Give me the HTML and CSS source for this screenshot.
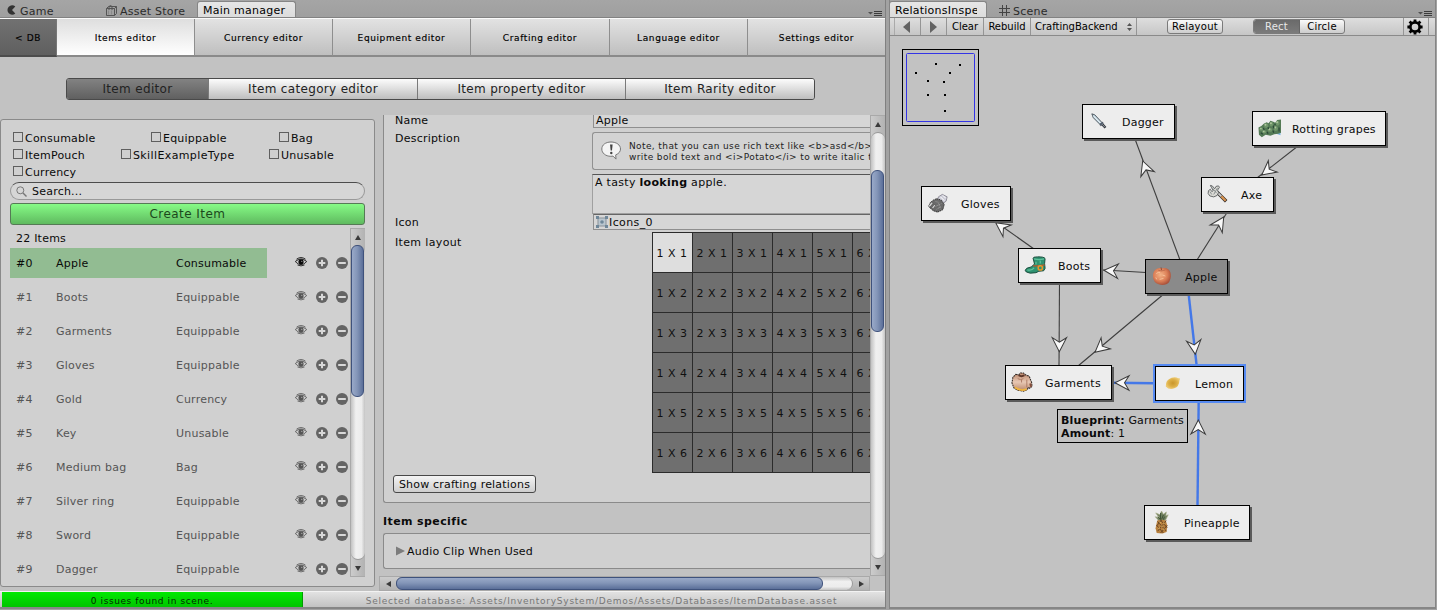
FILE: index.html
```html
<!DOCTYPE html>
<html lang="en">
<head>
<meta charset="utf-8">
<title>Main manager</title>
<link rel="stylesheet" href="styles.css">
</head>
<body>
<svg class="defs" width="0" height="0">
  <defs>
    <linearGradient id="tunic" x1="0" y1="0" x2="0" y2="1"><stop offset="0" stop-color="#b98468"/><stop offset=".5" stop-color="#e8c8b4"/><stop offset="1" stop-color="#b88468"/></linearGradient>
    <radialGradient id="fruit" cx=".42" cy=".4" r=".62"><stop offset="0" stop-color="#f3b387"/><stop offset=".6" stop-color="#dc8058"/><stop offset="1" stop-color="#a8503a"/></radialGradient>
    <radialGradient id="citrus"><stop offset="0" stop-color="#c9962c"/><stop offset=".6" stop-color="#dcae45"/><stop offset="1" stop-color="#ecc870"/></radialGradient>
  </defs>
  <symbol id="eye" viewBox="0 0 12 10">
    <path d="M.3 4.500Q6-.4 11.700 4.500M1.500 2.200Q6-1 10.500 2.200" fill="none" stroke="currentColor" stroke-width=".9"/>
    <path d="M.3 4.600Q6 10.800 11.700 4.600M2.500 8Q6 9.800 9.500 8" fill="none" stroke="currentColor" stroke-width=".8"/>
    <circle cx="6" cy="4.800" r="2.600" fill="currentColor"/><circle cx="6.800" cy="4.200" r=".5" fill="#ddd"/>
  </symbol>
  <symbol id="plus" viewBox="0 0 12 12"><circle cx="6" cy="6" r="6" fill="#646464"/><path d="M6 2.700v6.600M2.700 6h6.600" stroke="#d8d8d8" stroke-width="2"/></symbol>
  <symbol id="minus" viewBox="0 0 12 12"><circle cx="6" cy="6" r="6" fill="#646464"/><path d="M2.200 6h7.600" stroke="#d8d8d8" stroke-width="2"/></symbol>
  <symbol id="menu" viewBox="0 0 14 6"><path d="M0 1h5L2.500 3.600z" fill="#505050"/><path d="M6 .5h8M6 2.500h8M6 4.500h8" stroke="#3c3c3c"/></symbol>
  <symbol id="dagger" viewBox="0 0 24 24">
    <path d="M4 4l3 1 7.500 8-2 2L5.500 8z" fill="#bfd3df" stroke="#3c464e" stroke-width=".9"/><path d="M5.500 6l7.500 7.600" stroke="#f8ffff" stroke-width=".9"/><path d="M15 12.800l1 1-2.600 2.600-1-1z" fill="#607a8c" stroke="#334" stroke-width=".8"/><path d="M15 15l3.200 3.500" stroke="#30343a" stroke-width="2.600"/><path d="M15 15l2.700 3" stroke="#a2abb4" stroke-width=".9"/>
  </symbol>
  <symbol id="grapes" viewBox="0 0 24 24">
    <path d="M14 15l9.500-1v5l-6-2z" fill="#79b3df"/>
    <path d="M.5 11l3-1.500L6 7l3-1.500 2 1 2-2.500 3 1 2 1 2-3 4-.5v14l-3 1-4 .5-4 1.500-5-1-4 2.500-3-2.500z" fill="#547a55"/>
    <g fill="#6f9569"><ellipse cx="3.500" cy="12.700" rx="2.200" ry="1.700"/><ellipse cx="8.500" cy="9" rx="2.200" ry="2.600"/><ellipse cx="14" cy="7.500" rx="1.800" ry="2.500"/><ellipse cx="20.500" cy="6.500" rx="2" ry="2.600"/><ellipse cx="12.500" cy="13.500" rx="2.500" ry="2"/><ellipse cx="18.500" cy="12" rx="2.300" ry="2.600"/><ellipse cx="6.500" cy="15.500" rx="2.200" ry="1.800"/></g>
    <g fill="#adc69c"><circle cx="7.800" cy="8" r="1"/><circle cx="13.500" cy="6.500" r="1"/><circle cx="20" cy="5.500" r="1.100"/><circle cx="3" cy="12" r=".9"/><circle cx="18" cy="11" r="1"/><circle cx="12" cy="12.800" r="1"/><circle cx="6" cy="15" r=".9"/></g>
    <path d="M5.500 11.500l1 2M10.500 10.500l.5 2M16 9l.5 3M9.500 15.500l1 2M15.500 14l1 2.500M3 16.500l2 1.500M17.500 7l.5 1.500M22 11v4" stroke="#2c4a38" stroke-width="1.300" fill="none"/>
  </symbol>
  <symbol id="axe" viewBox="0 0 24 24">
    <path d="M10 9l10 10" stroke="#2d2926" stroke-width="3.600"/><path d="M9 8l6 6" stroke="#ccc" stroke-width="2"/><path d="M15 14l4.500 4.500" stroke="#d69250" stroke-width="2.400"/>
    <path d="M3.500 2.500l2 .5 2.500 3 1.500-2.500L12 3l1 1.500-2 3 1 2.500-1.500 3-3.500 1.500-4-1L1.200 11 1.500 8l2-1.500L5 9l1.500-1z" fill="#dbdbd6" stroke="#55585a" stroke-width=".9"/><path d="M4 3.500l6 7M7 12l4-7M3 9l2 3" stroke="#878d8e" fill="none"/>
  </symbol>
  <symbol id="gloves" viewBox="0 0 24 24">
    <path d="M12 5l4-2.500 5 2.500-1 4.500-4 3-5-4z" fill="#cdcdd8" stroke="#86848f" stroke-width=".9"/><path d="M14 5l4 4M16.500 3.500l3 3" stroke="#fff"/>
    <path d="M10 7l5 1.500 3 4.500-1.500 5.500-5.500 2.500-4.500-1.500-4.500-4 1.500-4.500 3-2.500z" fill="#6a6a6a" stroke="#303030" stroke-dasharray="1.500 .8"/><path d="M1.500 14.500l3-4 2 1-3.500 4.500zM4.500 17l3-4 1.500 1-2.500 3.500z" fill="#d4d4d4" stroke="#444" stroke-width=".6"/><path d="M9 15l6-3M10 18l5-3M9 10l4 1M12 12l2 6" stroke="#a4a4a4" stroke-dasharray="1 1"/>
  </symbol>
  <symbol id="boots" viewBox="0 0 24 24">
    <path d="M9.500 4.500Q9 3 14 3q7-.2 8 1.800L21.500 10l.5 5-1.500 2.500-5 .5-3 1.500-6 .5Q1 19 1.300 17q.2-2.500 6.200-3.500l3.500-3z" fill="#2e9270" stroke="#17493a"/><path d="M10.500 5q5 1.500 10.500 0M12.500 8v3M17 7v3M3.500 16.500q5 1 7-2" stroke="#5fc19b" fill="none" stroke-width="1.300"/><path d="M9.500 12.500q6 0 12-1" stroke="#a55e34" stroke-width="1.600" fill="none"/><circle cx="17" cy="14.500" r="2.200" fill="none" stroke="#e7962b" stroke-width="1.600"/>
  </symbol>
  <symbol id="apple" viewBox="0 0 24 24"><path d="M11.500 3.500Q15 2.500 18 4.500q3 2.500 2.700 7.500-.7 6.500-4.700 8-4 1.500-8 .2Q2.500 18.500 2 12q-.2-6 4.500-8.300 2.500-1 5-.2z" fill="url(#fruit)"/><path d="M10.500 2.500l.5 3" stroke="#8a4a38"/><path d="M7.500 5.500q3.500 1.500 7.500-.3" stroke="#bd6a4a" fill="none" stroke-width=".9"/><path d="M5.500 9q2-2 4-1M5 13l1 2M9 15l4-1M12 10.500l3 1" stroke="#f8c69e" fill="none" stroke-width=".9"/></symbol>
  <symbol id="garments" viewBox="0 0 24 24">
    <path d="M5 3.500l3 .5 2-2h3l2 2 4 1.500 2.500 6.500.5 4-2.500 2-1.500-1-1 2.500-4 1.500-6-1-4-2.500-2-5 1-6z" fill="url(#tunic)" stroke="#342b27" stroke-width="1.100" stroke-dasharray="2 .7"/><path d="M8 4.500q3 2 6 0" stroke="#5b3427" stroke-width="2" fill="none"/><path d="M7 8q3 2 6 0M11 9v3M16.500 9v8" stroke="#a8745e" fill="none" stroke-width=".9"/><path d="M4 17q6 4.500 12.500 2" stroke="#efb43e" stroke-width="1.900" fill="none"/><path d="M20 13l1 3.500" stroke="#844d3b" stroke-width="2"/>
  </symbol>
  <symbol id="lemon" viewBox="0 0 24 24"><path d="M5 15q-.5-6.500 6-9 4-1.200 7 .5l1.800.3-.6 2.200Q19 15 14 17q-5.500 2-9-2z" fill="url(#citrus)"/></symbol>
  <symbol id="pineapple" viewBox="0 0 24 24">
    <path d="M9 10L5.500 6l4 1-3.500-5 4.500 2 1.500-4 2 3.500 3-2.500-.5 4 2.500-1-3 6z" fill="#718160" stroke="#a6ac88" stroke-width=".7"/><path d="M11 2v7M14 4l-2 5M8 6l3 3M15 6l-1 3" stroke="#37492f" stroke-width=".9"/>
    <path d="M7.500 10q4.500-1.500 9 0l1.500 5-.7 7-4.300 1.500-6-.5-1.200-5z" fill="#b9813f"/><path d="M8 11l9 10M7 15l7 8M11 9.500l7 8M17 10l-9 11M18 15l-7 8M12 9.500l-5 6" stroke="#603d1e" stroke-width=".9"/><path d="M10 12h1M14 13h1M12 16h1M9 18h1M14 19h1" stroke="#f1cd78" stroke-width="1.500"/>
  </symbol>
</svg>

<main class="desktop">
  <section class="dock manager">
    <nav class="tabs">
      <div class="tab game"><svg width="9" height="10" viewBox="0 0 9 10"><path d="M8.300 1.500A4.700 4.700 0 1 0 8.300 8.500L5 5z" fill="#333"/></svg><span>Game</span></div>
      <div class="tab store"><svg width="11" height="11" viewBox="0 0 11 11" fill="none" stroke="#555"><path d="M.5 3.500h8v7h-8zM8.500 10.500l2-2v-7l-2 2M.5 3.500l2-2h8M3 5V1.500Q4.500-.5 6 1.500V5"/><path d="M2.500 5.500v4M5.500 5.500v4" stroke="#8a8a8a"/></svg><span>Asset Store</span></div>
      <div class="tab active main-tab">Main manager</div>
      <svg class="menu" width="14" height="6"><use href="#menu"/></svg>
    </nav>
    <nav class="editors">
      <a class="db">&lt; DB</a><a class="on">Items editor</a><a>Currency editor</a><a>Equipment editor</a><a>Crafting editor</a><a>Language editor</a><a>Settings editor</a>
    </nav>
    <nav class="segments"><a class="on">Item editor</a><a>Item category editor</a><a>Item property editor</a><a>Item Rarity editor</a></nav>
    <div class="work">
      <aside class="panel">
        <div class="filters">
          <div class="frow f1"><label><i></i>Consumable</label><label><i></i>Equippable</label><label><i></i>Bag</label></div>
          <div class="frow f2"><label><i></i>ItemPouch</label><label><i></i>SkillExampleType</label><label><i></i>Unusable</label></div>
          <div class="frow"><label><i></i>Currency</label></div>
        </div>
        <div class="search"><svg width="11" height="11" viewBox="0 0 11 11" fill="none" stroke="#777"><circle cx="4.300" cy="4.300" r="3.500"/><path d="M7 7l3.500 3.500" stroke-width="1.400"/></svg><span>Search...</span></div>
        <div class="create">Create Item</div>
        <div class="listwrap">
          <div class="list"><div class="count">22 Items</div><div id="items"></div></div>
          <div class="vbar listbar"><b class="up"></b><div class="track"><div class="thumb"></div></div><b class="down"></b></div>
        </div>
      </aside>
      <div class="detail">
        <div class="view">
          <div class="scrollarea">
            <div class="box props">
              <div class="prop pname"><span>Name</span><div class="field">Apple</div></div>
              <div class="prop pdesc"><span>Description</span>
                <div class="desc">
                  <div class="help"><svg width="21" height="19" viewBox="0 0 21 19"><path d="M10 1C4.500 1 .8 4 .8 8s3.700 7.300 9 7.300l2.200-.2 3 3-.3-4.200C18 12.500 19.500 10.500 19.500 8 19.500 4 15.500 1 10 1z" fill="#f4f4f4" stroke="#777"/><path d="M9 3.500h2.600L11 9.600H9.700z" fill="#444"/><circle cx="10.300" cy="12" r="1.200" fill="#444"/></svg><p>Note, that you can use rich text like &lt;b&gt;asd&lt;/b&gt;<br>write bold text and &lt;i&gt;Potato&lt;/i&gt; to write italic t</p></div>
                  <div class="textarea">A tasty <b>looking</b> apple.</div>
                </div>
              </div>
              <div class="prop picon"><span>Icon</span><div class="field"><svg width="12" height="12" viewBox="0 0 12 12"><path d="M2 2h8v8H2z" fill="#b9c6cf" stroke="#8b9299"/><g fill="#6f8799"><path d="M0 0h3v3H0zM9 0h3v3H9zM0 9h3v3H0zM9 9h3v3H9z"/><circle cx="6" cy="6" r="1.800"/></g></svg><span>Icons_0</span></div></div>
              <div class="prop playout"><span>Item layout</span><div class="cells" id="cells"></div></div>
              <div class="button">Show crafting relations</div>
            </div>
            <h2>Item specific</h2>
            <div class="box clip"><svg width="9" height="10"><path d="M0 0.500L9 5 0 9.500z" fill="#7c7c7c"/></svg><span>Audio Clip When Used</span></div>
          </div>
          <div class="hbar"><b class="left"></b><div class="track"><div class="thumb"></div></div><b class="right"></b></div>
        </div>
        <div class="vbar detailbar"><b class="up"></b><div class="track"><div class="thumb"></div></div><b class="down"></b></div>
      </div>
    </div>
    <footer class="status"><div class="issues">0 issues found in scene.</div><div class="dbpath">Selected database: Assets/InventorySystem/Demos/Assets/Databases/ItemDatabase.asset</div></footer>
  </section>

  <section class="dock relations">
    <nav class="tabs">
      <div class="tab active rel-tab"><span>RelationsInspector</span></div>
      <div class="tab scene"><svg width="11" height="11" viewBox="0 0 11 11"><path d="M3.500 0v11M7.500 0v11M0 3.500h11M0 7.500h11" stroke="#444"/></svg><span>Scene</span></div>
      <svg class="menu" width="14" height="6"><use href="#menu"/></svg>
    </nav>
    <div class="toolbar">
      <div class="t nav1"><svg width="7" height="12"><path d="M7 0v12L0 6z" fill="#636363"/></svg></div>
      <div class="t nav2"><svg width="7" height="12"><path d="M0 0v12l7-6z" fill="#636363"/></svg></div>
      <div class="t clear">Clear</div><div class="t rebuild">Rebuild</div>
      <div class="t backend"><span>CraftingBackend</span><svg width="5" height="8"><path d="M0 3h5L2.500 0zM0 5h5L2.500 8z" fill="#555"/></svg></div>
      <div class="pill relayout">Relayout</div>
      <div class="pill choice"><span class="on">Rect</span><span>Circle</span></div>
      <div class="gear"><svg width="16" height="16" viewBox="-8 -8 16 16"><circle r="4.600" fill="none" stroke="#000" stroke-width="2.600"/><g stroke="#000" stroke-width="2.800"><path d="M0-7.600V-5M0 7.600V5M-7.600 0H-5M7.600 0H5M-5.400-5.400l2 2M5.400 5.400l-2-2M-5.400 5.400l2-2M5.400-5.400l-2 2"/></g></svg></div>
    </div>
    <div class="graph" id="graph">
      <svg class="edges" width="547" height="572" viewBox="889 36 547 572" id="edges">
        <rect x="902.500" y="49.500" width="76" height="76" fill="none" stroke="#000"/>
        <rect x="906.500" y="53.500" width="68" height="68" rx="1" fill="none" stroke="#3434e6"/>
      </svg>
      <div class="tooltip"><b>Blueprint:</b> Garments<br><b>Amount</b>: 1</div>
    </div>
  </section>
</main>
<script src="app.js"></script>
</body>
</html>
```
FILE: styles.css
```css
* { box-sizing: border-box; }
body { margin: 0; width: 1437px; height: 610px; overflow: hidden; background: #a2a2a2; font: 11px/14px "DejaVu Sans", sans-serif; letter-spacing: .22px; color: #0a0a0a; white-space: nowrap; }
svg { display: block; flex: none; }
.defs { position: absolute; }
.desktop { display: grid; grid-template-columns: 886px 547px; column-gap: 3px; height: 610px; }
.dock { display: flex; flex-direction: column; height: 609px; background: #c2c2c2; overflow: hidden; border-bottom: 2px solid #868686; }
.manager { border-right: 1px solid #808080; }
.relations { border-left: 1px solid #858585; border-right: 1px solid #858585; }

.tabs { display: flex; height: 18px; flex: none; background: linear-gradient(#a5a5a5, #9f9f9f); border-bottom: 1px solid #828282; color: #2b2b2b; }
.tab { display: flex; padding-top: 5px; height: 17px; line-height: 13px; letter-spacing: .25px; }
.game { width: 99px; padding-left: 7px; gap: 4px; }
.store { width: 98px; padding-left: 7px; gap: 3px; }
.tab.active { padding: 2px 0 0 5px; background: linear-gradient(#e6e6e6, #dcdcdc); border: 1px solid #858585; border-bottom: 0; border-radius: 3px 3px 0 0; margin-top: 1px; height: 16px; color: #000; }
.tab svg { margin-top: 0; }
.main-tab { width: 99px; }
.menu { margin: 11px 3px 0 auto; }
.tab.rel-tab { width: 98px; margin-left: -1px; }
.rel-tab span { width: 82px; overflow: hidden; }
.scene { padding-left: 12px; gap: 3px; }

.editors { display: grid; grid-template-columns: 57px 138px 138px 138px 139px 138px 1fr; height: 39px; flex: none; border-top: 1px solid #fafafa; }
.editors a { display: flex; align-items: center; justify-content: center; padding-top: 1px; font-size: 9px; letter-spacing: .6px; background: linear-gradient(#e2e2e2, #bfbfbf); border-right: 1px solid #8e8e8e; border-bottom: 2px solid #8a8a8a; color: #000; -webkit-text-stroke: .15px #000; }
.editors a:last-child { border-right: 0; }
.editors .db { background: linear-gradient(#717171, #5f5f5f); border-bottom-color: #4c4c4c; border-right-color: #777; }
.editors .on { background: linear-gradient(#dedede, #fff); }

.segments { display: grid; grid-template-columns: 142px 209px 208px 1fr; width: 749px; height: 22px; margin: 21px 0 0 66px; flex: none; border: 1px solid #4a4a4a; border-radius: 3px; overflow: hidden; font-size: 12px; letter-spacing: .33px; }
.segments a { display: flex; align-items: center; justify-content: center; background: linear-gradient(#fcfcfc, #bebebe); border-right: 1px solid #7a7a7a; color: #222; }
.segments a:last-child { border-right: 0; }
.segments .on { background: linear-gradient(#828282, #606060); }

.work { display: grid; grid-template-columns: 375px 1fr; height: 491px; flex: none; padding-top: 15px; }
.panel { height: 468px; margin-top: 4px; border: 1px solid #8a8a8a; border-radius: 3px; background: #d0d0d0; padding: 9px 9px 0; }
.filters { height: 53px; padding: 0 3px; }
.frow { display: flex; height: 17px; }
.frow label { display: flex; gap: 2px; line-height: 20px; }
.frow i { width: 10px; height: 10px; margin-top: 3px; border: 1px solid #5f5f5f; }
.f1 label:nth-child(1) { width: 138px; }
.f1 label:nth-child(2) { width: 128px; }
.f2 label:nth-child(1) { width: 108px; }
.f2 label:nth-child(2) { width: 148px; letter-spacing: .38px; }
.search { display: flex; align-items: center; height: 18px; padding-left: 5px; gap: 5px; border: 1px solid #999; border-top-color: #4c4c4c; border-radius: 9px; background: #d6d6d6; }
.search span { padding-top: 2px; }
.create { display: flex; align-items: center; justify-content: center; height: 22px; margin-top: 3px; border: 1px solid #557a55; border-radius: 3px; background: linear-gradient(#86fb86, #5fba5f); font-size: 12px; letter-spacing: .45px; color: #1c481c; }
.listwrap { display: flex; justify-content: space-between; margin-top: 3px; height: 349px; }
.list { width: 338px; overflow: hidden; }
.count { height: 20px; padding: 4px 6px 0; line-height: 14px; }
.item { display: flex; align-items: center; height: 30px; margin-bottom: 4px; color: #555; }
.item .cols { display: grid; grid-template-columns: 40px 120px 1fr; width: 257px; height: 30px; padding-left: 6px; line-height: 32px; }
.item .eye { margin: -3px 9px 0 28px; }
.item .plus { margin: 0 8px 0 0; }
.item.sel { color: #0a0a0a; }
.item.sel .cols { background: #92bc92; }

.vbar { display: flex; flex-direction: column; width: 15px; border: 1px solid #a9a9a9; border-width: 1px 0 1px 1px; background: linear-gradient(90deg, #ccc, #b2b2b2); }
.vbar b, .hbar b { display: flex; align-items: center; justify-content: center; flex: none; }
.vbar b { height: 16px; }
.vbar b::after, .hbar b::after { content: ""; border: 3.5px solid transparent; }
.up::after { border-bottom: 5px solid #3a3a3a !important; border-top: 0 !important; }
.down::after { border-top: 5px solid #3a3a3a !important; border-bottom: 0 !important; }
.left::after { border-right: 5px solid #3a3a3a !important; border-left: 0 !important; }
.right::after { border-left: 5px solid #3a3a3a !important; border-right: 0 !important; }
.vbar .track { flex: 1; width: 14px; border-radius: 7px; background: linear-gradient(90deg, #c2c2c2, #f0f0f0 35%, #ececec 75%, #c4c4c4); border: 1px solid #999; border-width: 1px 0; }
.vbar .thumb { width: 13px; border: 1px solid #3f527c; border-radius: 6px; background: linear-gradient(90deg, #99a9c8, #8496b8 45%, #5b6f99); }
.listbar .thumb { height: 152px; margin-top: -1px; }
.detail { display: grid; grid-template-columns: 487px 15px; margin-left: 4px; justify-content: end; }
.detailbar { height: 461px; width: 15px; }
.detailbar .thumb { height: 162px; margin-top: 37px; }
.view { width: 491px; height: 476px; margin-left: -4px; }
.scrollarea { height: 461px; overflow: hidden; padding-left: 4px; }
.hbar { display: flex; width: 491px; height: 15px; border: 1px solid #a9a9a9; background: linear-gradient(#ccc, #b2b2b2); }
.hbar b { width: 16px; }
.hbar .track { flex: 1; border: 1px solid #999; border-width: 0 1px; border-radius: 7px; background: linear-gradient(#c2c2c2, #f0f0f0 35%, #ececec 75%, #c4c4c4); }
.hbar .thumb { width: 427px; height: 13px; margin-left: -1px; border: 1px solid #3f527c; border-radius: 6px; background: linear-gradient(#99a9c8, #8496b8 45%, #5b6f99); }
.box { border: 1px solid #8a8a8a; border-right: 0; background: #d0d0d0; }
.props { height: 388px; border-top: 0; border-bottom-left-radius: 3px; padding-left: 11px; width: 487px; overflow: hidden; }
.prop { display: grid; grid-template-columns: 197px 278px; }
.pname { height: 17px; }
.pname > span { margin-top: -1px; }
.field { display: flex; margin-left: 1px; background: #d6d6d6; border: 1px solid #8f8f8f; border-right: 0; padding-left: 2px; }
.pname .field { height: 13px; border-top: 0; line-height: 12px; }
.pdesc { height: 82px; }
.pdesc > span { margin-top: 0; }
.help { display: flex; height: 38px; border: 1px solid #919191; border-right: 0; border-radius: 3px 0 0 3px; padding: 8px 0 0 8px; background: #d3d3d3; gap: 7px; }
.help p { margin: 0; font-size: 9px; line-height: 11px; letter-spacing: .39px; color: #222; }
.textarea { height: 40px; margin-top: 4px; border: 1px solid #a0a0a0; border-width: 1px 0 1px 1px; border-top-color: #555; background: #d6d6d6; padding: 1px 2px; letter-spacing: .3px; }
.picon { height: 18px; }
.picon > span { margin-top: 2px; }
.picon .field { height: 16px; border-top-color: #666; align-items: center; gap: 1px; }
.field span { padding-top: 1px; letter-spacing: .4px; }
.playout > span { margin-top: 4px; letter-spacing: .35px; }
.playout { height: 243px; }
.cells { display: grid; grid-template-columns: repeat(6, 40px); grid-auto-rows: 40px; width: 218px; margin-left: 60px; border-left: 1px solid #2b2b2b; border-top: 1px solid #2b2b2b; height: 241px; overflow: hidden; }
.cells div { border: 1px solid #2b2b2b; border-width: 0 1px 1px 0; background: #6f6f6f; text-align: center; line-height: 42px; padding-right: 1px; color: #101010; letter-spacing: .45px; }
.cells .on { background: #dedede; }
.button { width: 143px; height: 18px; margin-left: -2px; border: 1px solid #484848; border-radius: 3px; background: linear-gradient(#f4f4f4, #cecece); text-align: center; line-height: 17px; letter-spacing: .2px; }
h2 { margin: 12px 0 4px 0; font-size: 11px; line-height: 14px; font-weight: bold; letter-spacing: .4px; }
.clip { display: flex; align-items: center; height: 36px; padding-left: 12px; gap: 2px; border-radius: 3px 0 0 3px; }
.clip span { padding-top: 2px; }
.status { display: flex; height: 16px; flex: none; border-top: 1px solid #f2f2f2; padding-left: 2px; background: linear-gradient(#e2e2e2, #c2c2c2); font-size: 9px; line-height: 19px; text-align: center; letter-spacing: .59px; color: #777; }
.issues { width: 301px; background: linear-gradient(#00ea00, #00c400); border-right: 1px solid #009c00; color: #032c03; }
.dbpath { width: 600px; flex: none; margin-right: -20px; padding-right: 3px; letter-spacing: .75px; }

.toolbar { display: flex; height: 18px; flex: none; background: linear-gradient(#dedede, #c6c6c6); border-bottom: 1px solid #8a8a8a; font-size: 10px; line-height: 18px; padding-left: 4px; color: #000; letter-spacing: 0; }
.toolbar .t { border-right: 1px solid #959595; display: flex; align-items: center; justify-content: center; height: 17px; }
.toolbar .nav1 { width: 27px; border-left: 1px solid #aaa; padding-right: 3px; }
.nav2 { width: 26px; }
.clear { width: 37px; }
.rebuild { width: 47px; }
.toolbar .backend { width: 106px; justify-content: space-between; padding: 0 4px; }
.pill { height: 15px; margin-top: 1px; border: 1px solid #7b7b7b; border-radius: 3px; background: linear-gradient(#fafafa, #cdcdcd); line-height: 14px; text-align: center; overflow: hidden; letter-spacing: .25px; }
.relayout { width: 56px; margin-left: 30px; }
.choice { display: grid; grid-template-columns: 46px 1fr; width: 92px; margin-left: 30px; }
.choice .on { background: linear-gradient(#6a6a6a, #7c7c7c); color: #e8e8e8; border-right: 1px solid #666; }
.gear { width: 26px; margin-left: auto; margin-right: 6px; border: 1px solid #959595; border-width: 0 1px; padding: 1px 0 0 3px; }

.graph { position: relative; height: 572px; }
.edges { position: absolute; left: -1px; top: 0; }
.node { position: absolute; height: 35px; display: flex; align-items: center; gap: 11px; padding-left: 5px; border: 1px solid #000; background: #ededed; box-shadow: 2px 2px 0 #5a5a5a; letter-spacing: .22px; }
.node span { padding-top: 2px; }
.node.current { background: #8a8a8a; }
.node.picked { box-shadow: 0 0 0 2px #568af2; }
.tooltip { position: absolute; left: 167px; top: 373px; width: 131px; height: 34px; border: 1px solid #000; padding: 4px 3px; line-height: 13px; background: #c2c2c2; letter-spacing: .17px; }
```
FILE: app.js
```js
const items = [["Apple","Consumable"],["Boots","Equippable"],["Garments","Equippable"],["Gloves","Equippable"],["Gold","Currency"],["Key","Unusable"],["Medium bag","Bag"],["Silver ring","Equippable"],["Sword","Equippable"],["Dagger","Equippable"]];
document.getElementById("items").innerHTML = items.map(([name, type], i) =>
  `<div class="item${i ? "" : " sel"}"><div class="cols"><span>#${i}</span><span>${name}</span><span>${type}</span></div>` +
  `<svg class="eye" width="12" height="10"><use href="#eye"/></svg><svg class="plus" width="12" height="12"><use href="#plus"/></svg><svg class="minus" width="12" height="12"><use href="#minus"/></svg></div>`).join("");

let cells = "";
for (let r = 1; r <= 6; r++) for (let c = 1; c <= 6; c++) cells += `<div class="${r * c === 1 ? "on" : ""}">${c} X ${r}</div>`;
document.getElementById("cells").innerHTML = cells;

// Edge: start x/y, end x/y, arrow tip x/y, highlighted
const edges = [
  [1180,260,1135,139,1142.7,161],[1197,260,1228,211,1223.7,217],[1298,146,1257,178,1261.7,175],
  [1034,249,993,220,995.7,222.7],[1146,272.5,1100,269.700,1104,270.300],[1059.500,282,1059,366,1059.300,351.700],
  [1165,293,1078,366,1095,352.300],[1188.500,293,1196.700,366,1195.300,354.300,1],[1155,383.300,1111,382.700,1115,382.700,1],[1197.500,506,1198.700,400,1198.300,420,1]
];
let art = "";
for (const [x1, y1, x2, y2, tx, ty, hot] of edges) {
  const angle = Math.atan2(y2 - y1, x2 - x1) * 180 / Math.PI;
  art += `<path d="M${x1} ${y1}L${x2} ${y2}" stroke="${hot ? "#4478e8" : "#3e3e3e"}" stroke-width="${hot ? 2.4 : 1.1}"/>`;
  art += `<path transform="translate(${tx} ${ty}) rotate(${angle})" d="M0 0L-14-7.200-9.500 0-14 7.200z" fill="#f8f8f8" stroke="#3a3a3a"/>`;
}
for (const [x, y] of [[936,64],[960,65],[916,73],[950,73],[928,81],[944,82],[928,95],[945,95],[945,111]])
  art += `<rect x="${x - 1}" y="${y - 1}" width="2" height="2"/>`;
document.getElementById("edges").insertAdjacentHTML("beforeend", art);

const nodes = [["Dagger","dagger",1082,104,93],["Rotting grapes","grapes",1252,111,134],["Axe","axe",1201,177,73],["Gloves","gloves",921,186,90],["Boots","boots",1018,248,83],["Apple","apple",1145,259,83,"current"],["Garments","garments",1005,365,107],["Lemon","lemon",1155,366,89,"picked"],["Pineapple","pineapple",1144,505,106]];
document.getElementById("graph").insertAdjacentHTML("beforeend", nodes.map(([label, icon, x, y, w, cls]) =>
  `<div class="node ${cls || ""}" style="left:${x - 890}px;top:${y - 36}px;width:${w}px"><svg width="23" height="23"><use href="#${icon}"/></svg><span>${label}</span></div>`).join(""));
```
